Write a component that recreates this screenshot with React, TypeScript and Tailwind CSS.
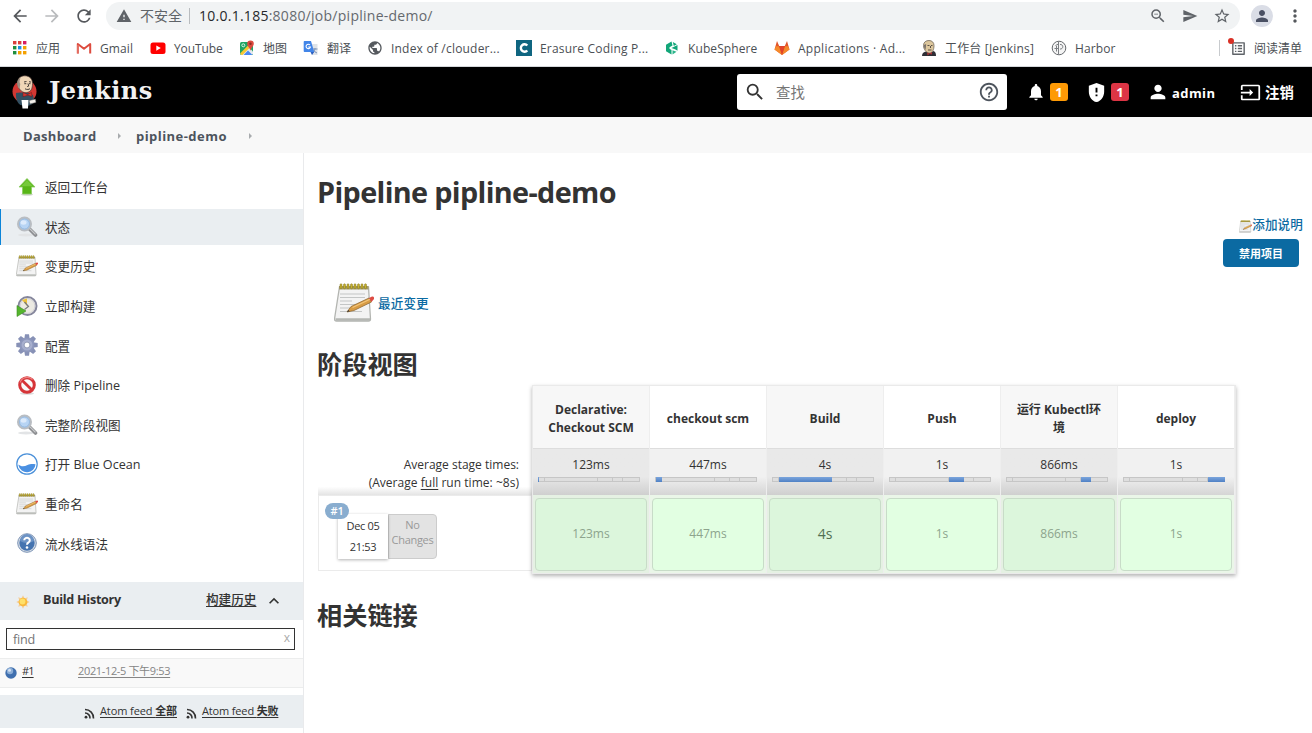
import React from 'react';
import {
  MdArrowBack, MdArrowForward, MdRefresh, MdWarning, MdZoomOut, MdSend, MdStarBorder, MdPerson, MdMoreVert,
  MdSearch, MdHelpOutline, MdNotifications, MdGppMaybe, MdInput, MdKeyboardArrowUp, MdListAlt, MdPublic,
} from 'react-icons/md';

type IconProps = { className?: string };

const AppsIcon = () => (
  <svg viewBox="0 0 16 16" className="size-4">
    {['#d93f3c', '#d93f3c', '#d81b60', '#1e8e3e', '#1a8fe3', '#f4a100', '#1e8e3e', '#f4a100', '#f4a100'].map((c, i) => (
      <rect key={i} x={1 + (i % 3) * 5} y={1 + Math.floor(i / 3) * 5} width="3.4" height="3.4" fill={c} />
    ))}
  </svg>
);

const GmailIcon = () => (
  <svg viewBox="0 0 16 16" className="size-4">
    <path d="M1.8 13.5V4L8 8.7 14.2 4v9.500" fill="none" stroke="#dd4b3e" strokeWidth="2" strokeLinejoin="round" />
    <path d="M2 5v8.500" stroke="#e57368" strokeWidth="1.600" />
  </svg>
);

const YouTubeIcon = () => (
  <svg viewBox="0 0 16 16" className="size-4">
    <rect x="0.500" y="2.500" width="15" height="11.500" rx="2.500" fill="#f00" />
    <path d="M6.300 5.500v5.200L10.800 8.100z" fill="#fff" />
  </svg>
);

const MapsIcon = () => (
  <svg viewBox="0 0 16 16" className="size-4">
    <rect x="1" y="2" width="13" height="13" rx="1.500" fill="#1fa463" />
    <path d="M1.500 15 9.500 7 14 11.500V13.500L12.500 15z" fill="#e8eaed" />
    <path d="M1 13.500 9 5.500l2 2L3.500 15H2.500z" fill="#f7c933" />
    <path d="M4.500 15l4.500-4.500L13.500 15z" fill="#4a89f3" />
    <circle cx="4.300" cy="5.300" r="1.500" fill="none" stroke="#d8f5e6" strokeWidth="1" />
    <path d="M11.500 0.500a3.300 3.300 0 0 0-3.300 3.300c0 2.200 2.300 3.200 3.300 7 1-3.800 3.300-4.800 3.300-7A3.300 3.300 0 0 0 11.500.5z" fill="#dd4b3e" />
    <circle cx="11.500" cy="3.800" r="1.200" fill="#8c2a22" />
  </svg>
);

const TranslateIcon = () => (
  <svg viewBox="0 0 16 16" className="size-4">
    <path d="M6 4h8.500v11H9z" fill="#dfe3e8" />
    <path d="M9.500 9h5M12 8v1c-.5 2-1.500 3-2.500 4M10.500 10c.8 1.500 2 2.500 3.500 3" stroke="#7b93b8" fill="none" />
    <path d="M1.500 1H8l3.200 11H1.500A1 1 0 0 1 .7 11V2a1 1 0 0 1 .8-1z" fill="#4285e8" />
    <path d="M7.500 12h3.700L9 15z" fill="#2b5fc0" />
    <path d="M7 5A2.200 2.200 0 1 0 7.400 7H5.200" fill="none" stroke="#fff" strokeWidth="1.100" />
  </svg>
);

const ErasureIcon = () => (
  <svg viewBox="0 0 16 16" className="size-4">
    <rect width="16" height="16" fill="#0f6580" />
    <path d="M11.300 5.500A3.700 3.700 0 1 0 11.300 10.500" fill="none" stroke="#fff" strokeWidth="2.400" />
  </svg>
);

const KubeSphereIcon = () => (
  <svg viewBox="0 0 16 16" className="size-4">
    <path d="M7.500 1.500 2 4.800v6.400l5.500 3.300V10L5.500 8.800V7.200L8.500 5.500z" fill="#12a679" />
    <path d="M8.800 2l4 2.300-3 1.700zM13.500 5v5.800L11.500 9.500 7.500 8z" fill="#12a679" />
    <path d="M8.500 10.200l4 1.600-4 2.600z" fill="#2cb58b" />
  </svg>
);

const GitLabIcon = () => (
  <svg viewBox="0 0 16 16" className="size-4">
    <path d="M8 15 .5 9.500 3 1l2.200 5h5.600L13 1l2.500 8.500z" fill="#e2562b" />
    <path d="M8 15 .5 9.500 2 6.200h3.200zM8 15l7.500-5.500L14 6.200h-3.200z" fill="#f58a2b" />
    <path d="M8 15 5 6h6z" fill="#e24329" />
  </svg>
);

const ButlerIcon = ({ className }: IconProps) => (
  <svg viewBox="0 0 26 34" className={className}>
    <ellipse cx="12.500" cy="16.500" rx="12" ry="11.500" fill="#d33833" />
    <path d="M4 18c3-1 13-1 17 2l1.500 7c-3 3-6 4-9 4l-5-1c-3-2-5-6-4.500-12z" fill="#335061" />
    <path d="M5.500 9C5 3.500 9 .6 13 .8c5 .1 7.500 3.600 7.500 7.800 0 5-1.500 8.500-6 9C10 18 7.500 14.500 6.500 12z" fill="#f0d6b7" stroke="#4a3a32" strokeWidth=".7" />
    <path d="M5.200 8c0 3 .8 5 2.300 6L8.300 9C7.200 7.500 7.500 5 8.500 3.200 6.500 3.700 5.200 5.500 5.200 8z" fill="#9b8f82" />
    <path d="M12 7l2.500-.5M17 6.700l2 .4M12.300 8.700h2M17 8.700h1.500M16 8.500l.7 2.600-1.500.5M13 13.800c2 1 4 .8 5-.2" stroke="#302a28" strokeWidth=".9" fill="none" />
    <path d="M11 17.500l4.500 2 4-2 .5 4-4-1.300-5 1.500z" fill="#d33833" stroke="#6d1514" strokeWidth=".5" />
    <path d="M9.500 25h7l-.5 8.500H10.500z" fill="#fff" />
    <path d="M17 25.500l6.500-1.500.5 3.500-6 1.500z" fill="#f3efe9" stroke="#4a4a4a" strokeWidth=".5" />
  </svg>
);

const MiniButlerIcon = () => (
  <svg viewBox="0 0 16 16" className="size-4">
    <path d="M1 16c0-3 2-4 4-4.500l4 1.500 3.500-2c2 .5 2.500 2.500 2.500 5z" fill="#2e2f36" />
    <path d="M2.500 5.500C2.500 2 5 .5 8 .5s5 2 5 5c0 4-1.500 7.500-4.500 7.500S2.500 9.500 2.500 5.500z" fill="#dcc69c" stroke="#746a5d" strokeWidth=".8" />
    <path d="M3 5c0 2 .5 4 1.500 5L5.200 4z" fill="#77706a" />
    <path d="M6.500 5.500h2M10 5.500h1.500M9.500 6v2M7 10h3.500" stroke="#4c443d" strokeWidth=".9" />
    <path d="M6 12.500l2.500 1L11 12v2.500L8.500 14 6.500 15.500z" fill="#a33" />
  </svg>
);

const HarborIcon = () => (
  <svg viewBox="0 0 16 16" className="size-4">
    <circle cx="8" cy="8" r="6.800" fill="#f4f4f4" stroke="#666a6e" strokeWidth="1" />
    <path d="M7.500 2v12M3.500 8.500h4M4.500 5.500 7.500 4M9 4.500a2.300 2.300 0 1 1 0 4.500M5.500 6v5.500" fill="none" stroke="#7b7f83" strokeWidth="1" />
  </svg>
);

const FeedIcon = () => (
  <svg viewBox="0 0 11 11" className="mt-1 size-[11px]">
    <path d="M1 1.500a8.500 8.500 0 0 1 8.500 9M1 5a5 5 0 0 1 5 5.500" fill="none" stroke="#333" strokeWidth="1.600" />
    <circle cx="2" cy="9.200" r="1.400" fill="#333" />
  </svg>
);

const bookmarks: { icon: React.ReactNode; label: string; box: string; text?: string }[] = [
  { icon: <AppsIcon />, label: '应用', box: 'w-16' },
  { icon: <GmailIcon />, label: 'Gmail', box: 'w-[74px]' },
  { icon: <YouTubeIcon />, label: 'YouTube', box: 'w-[89px]', text: 'tracking-[-0.1px]' },
  { icon: <MapsIcon />, label: '地图', box: 'w-16' },
  { icon: <TranslateIcon />, label: '翻译', box: 'w-16' },
  { icon: <MdPublic className="size-4 text-[#55595e]" />, label: 'Index of /clouder...', box: 'w-[149px]', text: 'tracking-[0.2px]' },
  { icon: <ErasureIcon />, label: 'Erasure Coding P...', box: 'w-[148px]', text: 'tracking-[0.18px]' },
  { icon: <KubeSphereIcon />, label: 'KubeSphere', box: 'w-[110px]' },
  { icon: <GitLabIcon />, label: 'Applications · Ad...', box: 'w-[147px]', text: 'tracking-[0.27px]' },
  { icon: <MiniButlerIcon />, label: '工作台 [Jenkins]', box: 'w-[130px]', text: 'tracking-[0.18px]' },
  { icon: <HarborIcon />, label: 'Harbor', box: 'w-[100px]' },
];

const UpIcon = () => (
  <svg viewBox="0 0 22 22" className="size-[22px]">
    <ellipse cx="11" cy="18.500" rx="6" ry="1.300" fill="#d5d9d2" />
    <path d="M11 2.500 19 11h-3.500v7h-9v-7H3z" fill="#58b518" stroke="#8ccb62" strokeWidth=".8" />
    <path d="M11 4l6 6.300H5z" fill="#76c93b" />
  </svg>
);

const LensIcon = () => (
  <svg viewBox="0 0 22 22" className="size-[22px]">
    <ellipse cx="10" cy="19" rx="8" ry="1.500" fill="#e2e4e6" />
    <path d="M13.500 13l6 6" stroke="#8d8f92" strokeWidth="3.600" strokeLinecap="round" />
    <path d="M14 12.800l5.500 5.500" stroke="#c9cbcd" strokeWidth="1.200" />
    <circle cx="8.500" cy="8" r="6.500" fill="#a9cbef" stroke="#b9bdc2" strokeWidth="2" />
    <circle cx="8.500" cy="8" r="5" fill="#b7d4f4" stroke="#8fb0d6" strokeWidth=".7" />
    <ellipse cx="7.500" cy="6.500" rx="3" ry="2.200" fill="#dceafb" />
  </svg>
);

const NotepadIcon = ({ className = 'size-[22px]' }: IconProps) => (
  <svg viewBox="0 0 40 40" className={className}>
    <path d="M5.500 4h29l2 32q0 2-2 2h-32q-2 0-2-2z" fill="#f3f3f3" stroke="#b3b5b1" strokeWidth="1.300" />
    <path d="M1.500 36.500h34.500" stroke="#b5b7b3" strokeWidth="2.600" />
    <path d="M5 3h29.500v3.500H5z" fill="#a39a6a" />
    {[6, 9.500, 13, 16.500, 20, 23.500, 27, 30.500].map((x) => (
      <rect key={x} x={x} y="0.800" width="2" height="5" rx="1" fill="#c5b02d" stroke="#857721" strokeWidth=".5" />
    ))}
    <path d="M6 11h25M6 14.500h25M6 18h12M6 21.500h20M6 25h14M6 28.500h22" stroke="#c4c6c6" strokeWidth="1.100" />
    <path d="M13 29l4-5.500L35 15l2.500 4-17.500 8.500z" fill="#d89c45" stroke="#86602b" strokeWidth=".7" />
    <path d="M18.500 24.500 36 16.300" stroke="#f3c67b" strokeWidth="1.200" />
    <path d="M35 15l3-1.500q2.500-.3 2 2.500L37.500 19z" fill="#dd4b43" />
    <path d="M13 29l1.300-1.900 1.400 1.100z" fill="#333" />
  </svg>
);

const ClockIcon = () => (
  <svg viewBox="0 0 22 22" className="size-[22px]">
    <circle cx="11.500" cy="11" r="9" fill="#eceae2" stroke="#85869c" strokeWidth="2" />
    <circle cx="11.500" cy="11" r="7.400" fill="none" stroke="#c9c9d2" strokeWidth=".8" />
    <path d="M11 11 6 5l5-1.500z" fill="#ecc23b" />
    <path d="M8.500 7l4 4.500-4 3" fill="none" stroke="#77797b" strokeWidth="1.200" />
    <path d="M1 10.500 10 16 1 21.500z" fill="#55b52e" stroke="#3c8d22" strokeWidth=".6" />
  </svg>
);

const GearIcon = () => (
  <svg viewBox="0 0 22 22" className="size-[22px]">
    {[0, 45, 90, 135, 180, 225, 270, 315].map((a) => (
      <path key={a} d="M8.300 5 9 .3h4l.7 4.700z" fill="#8791b6" transform={`rotate(${a} 11 11)`} />
    ))}
    <circle cx="11" cy="11" r="7.300" fill="#8d97bc" />
    <circle cx="11" cy="11" r="5.500" fill="#a7afce" />
    <circle cx="11" cy="11" r="2.900" fill="#fff" stroke="#77809f" strokeWidth=".7" />
  </svg>
);

const NoEntryIcon = () => (
  <svg viewBox="0 0 22 22" className="size-[22px]">
    <ellipse cx="11" cy="19.500" rx="7" ry="1.300" fill="#dcdcdc" />
    <circle cx="11" cy="11" r="7.300" fill="#fafafa" stroke="#d63438" strokeWidth="3" />
    <path d="M6 6.200l10 9.800" stroke="#d63438" strokeWidth="2.800" />
    <path d="M4 8.500a7.600 7.600 0 0 1 12.500-3" fill="none" stroke="#ed8080" strokeWidth="1.200" />
  </svg>
);

const OceanIcon = () => (
  <svg viewBox="0 0 22 22" className="size-[22px]">
    <circle cx="11" cy="11" r="10.200" fill="#fff" stroke="#4a90d9" strokeWidth="1.200" />
    <path d="M2.500 11.500c2.500 2.500 6 2 9 .5 3-1.400 5-1.200 8-.8A8.600 8.600 0 0 1 2.500 12.500z" fill="#4a90e2" />
  </svg>
);

const HelpIcon = () => (
  <svg viewBox="0 0 22 22" className="size-[22px]">
    <circle cx="11" cy="11" r="9.300" fill="#d6dce5" stroke="#7b93b5" strokeWidth="1" />
    <circle cx="11" cy="11" r="7.700" fill="#4574b0" />
    <path d="M4 9a7 7 0 0 1 14 0q-7 4-14 0z" fill="#6c93c5" />
    <path d="M8.200 8.300a2.800 2.500 0 1 1 4.300 2.200q-1.500.8-1.500 2.300" fill="none" stroke="#fff" strokeWidth="2" />
    <circle cx="11" cy="15.500" r="1.300" fill="#fff" />
  </svg>
);

const SunIcon = () => (
  <svg viewBox="0 0 14 14" className="size-3.5">
    {[0, 45, 90, 135, 180, 225, 270, 315].map((a) => (
      <path key={a} d="M5.600 3 7 .3 8.400 3z" fill="#f4cd97" transform={`rotate(${a} 7 7)`} />
    ))}
    <circle cx="7" cy="7" r="4.300" fill="#f9b83a" />
    <circle cx="6.500" cy="6.500" r="2.900" fill="#ffe06a" />
  </svg>
);

const menu: { icon: React.ReactNode; label: string; active?: boolean }[] = [
  { icon: <UpIcon />, label: '返回工作台' },
  { icon: <LensIcon />, label: '状态', active: true },
  { icon: <NotepadIcon />, label: '变更历史' },
  { icon: <ClockIcon />, label: '立即构建' },
  { icon: <GearIcon />, label: '配置' },
  { icon: <NoEntryIcon />, label: '删除 Pipeline' },
  { icon: <LensIcon />, label: '完整阶段视图' },
  { icon: <OceanIcon />, label: '打开 Blue Ocean' },
  { icon: <NotepadIcon />, label: '重命名' },
  { icon: <HelpIcon />, label: '流水线语法' },
];

const stages = [
  { name: 'Declarative: Checkout SCM', time: '123ms' },
  { name: 'checkout scm', time: '447ms' },
  { name: 'Build', time: '4s' },
  { name: 'Push', time: '1s' },
  { name: '运行 Kubectl环境', time: '866ms' },
  { name: 'deploy', time: '1s' },
];

const segments = [1, 6, 53, 15, 10, 17];

function BrowserBar() {
  return (
    <div className="h-[67px] border-b border-[#d5d8db] bg-white text-[#4b4f54]">
      <div className="flex h-8 items-center">
        <MdArrowBack className="ml-2.5 size-5 text-[#55585c]" />
        <MdArrowForward className="ml-3 size-5 text-[#b9bbbd]" />
        <MdRefresh className="ml-3 size-5 text-[#55585c]" />
        <div className="ml-3 flex h-7 w-[1134px] items-center rounded-full bg-[#f1f3f4] pl-2.5">
          <MdWarning className="size-4 text-[#5f6368]" />
          <span className="ml-2 w-[43px] text-[14px] text-[#5f6368]">不安全</span>
          <span className="ml-1.5 h-4 w-px bg-[#b9bcbf]" />
          <span className="ml-[9px] text-[14px] tracking-[0.26px] text-[#65696e]">
            <span className="text-[#26282b]">10.0.1.185</span>:8080/job/pipline-demo/
          </span>
          <MdZoomOut className="ml-auto size-[18px] text-[#5f6368]" />
          <MdSend className="ml-[15px] size-4 text-[#5f6368]" />
          <MdStarBorder className="mr-[9px] ml-[15px] size-[18px] text-[#5f6368]" />
        </div>
        <span className="ml-[11px] flex size-[22px] items-center justify-center rounded-full bg-[#dadde6]">
          <MdPerson className="size-[18px] text-[#4a5063]" />
        </span>
        <MdMoreVert className="ml-3 size-5 text-[#55585c]" />
      </div>
      <div className="flex h-8 items-center pl-3 text-[12px]">
        {bookmarks.map((b) => (
          <div key={b.label} className={`flex shrink-0 items-center gap-2 ${b.box}`}>
            {b.icon}
            <span className={`pt-0.5 whitespace-nowrap ${b.text ?? 'tracking-[0.1px]'}`}>{b.label}</span>
          </div>
        ))}
        <div className="ml-[68px] flex h-4 items-center border-l border-[#c8cbce] pl-2.5">
          <span className="relative flex">
            <MdListAlt className="size-[17px] text-[#5f6368]" />
            <span className="absolute -top-0.5 -left-0.5 size-1.5 rounded-full bg-[#d93025]" />
          </span>
          <span className="ml-[7px] pt-0.5 whitespace-nowrap">阅读清单</span>
        </div>
      </div>
    </div>
  );
}

function Header() {
  return (
    <header className="flex h-[50px] items-center bg-black text-white">
      <ButlerIcon className="ml-3 h-[34px] w-[26px]" />
      <span className="-mt-0.5 ml-[11px] w-[109px] font-['DejaVu_Serif',serif] text-[24px] leading-[30px] font-bold tracking-[0.4px] text-[#f2f2f2]">
        Jenkins
      </span>
      <div className="ml-[579px] flex h-9 w-[270px] items-center rounded-[3px] bg-white pl-[7px]">
        <MdSearch className="size-[22px] text-[#333]" />
        <span className="ml-2.5 pt-0.5 text-[14.4px] text-[#757575]">查找</span>
        <MdHelpOutline className="mr-[7px] ml-auto size-[22px] text-[#4d545d]" />
      </div>
      <MdNotifications className="ml-[19px] size-5" />
      <span className="ml-1 flex size-[18px] items-center justify-center rounded-[3px] bg-[#fe9a05] pt-px text-[13px] font-bold">1</span>
      <MdGppMaybe className="ml-[17px] size-[23px]" />
      <span className="ml-[3px] flex size-[18px] items-center justify-center rounded-[3px] bg-[#dc3545] pt-px text-[13px] font-bold">1</span>
      <MdPerson className="ml-[18px] size-[22px]" />
      <span className="ml-[3px] w-[68px] pt-0.5 text-[13px] font-bold tracking-[0.4px]">admin</span>
      <MdInput className="size-[21px]" />
      <span className="ml-1 pt-0.5 text-[14.4px] font-bold">注销</span>
    </header>
  );
}

function Crumbs() {
  const arrow = <span className="size-0 border-y-[3px] border-l-[3px] border-y-transparent border-l-[#a8abae]" />;
  return (
    <nav className="flex h-9 items-center bg-[#f8f8f8] pt-0.5 pl-[23px] text-[13px] font-bold text-[#4d545d]">
      <span className="w-[95px] tracking-[0.3px]">Dashboard</span>
      {arrow}
      <span className="ml-[15px] w-[113px] tracking-[0.45px]">pipline-demo</span>
      {arrow}
    </nav>
  );
}

function Sidebar() {
  return (
    <aside className="flex w-[304px] shrink-0 flex-col border-r border-[#e9eaec]">
      <ul className="flex flex-col gap-[3.6px] pt-4">
        {menu.map((m, i) => (
          <li
            key={i}
            className={`flex h-9 items-center border-l pl-[15px] ${m.active ? 'border-[#0b84d8] bg-[#eaeef1]' : 'border-transparent'}`}
          >
            {m.icon}
            <span className="ml-[7px] pt-[3px] whitespace-nowrap text-[12.6px]">{m.label}</span>
          </li>
        ))}
      </ul>
      <div className="mt-[21px] flex h-[38px] items-center bg-[#eaeef1] pl-4">
        <span className="mt-0.5"><SunIcon /></span>
        <span className="-mt-0.5 ml-[13px] w-[163px] text-[12.6px] font-bold tracking-[-0.28px]">Build History</span>
        <span className="-mt-0.5 text-[12.6px] font-medium underline underline-offset-2">构建历史</span>
        <MdKeyboardArrowUp className="ml-2 size-[20px]" />
      </div>
      <div className="mx-[6px] mt-2 flex h-[22px] w-[289px] items-center justify-between border border-[#333] px-[5px] text-[#757575]">
        <span className="pt-0.5 pl-px text-[12.6px] tracking-[-0.2px]">find</span>
        <span className="-mt-0.5 mr-[-1px] text-[12px] text-[#aaa]">x</span>
      </div>
      <div className="mt-2 flex h-[30px] items-center border-y border-[#eceded] bg-[#f9f9f9] pb-1 pl-[5px] text-[11px]">
        <svg viewBox="0 0 12 12" className="mt-1 size-3">
          <circle cx="6" cy="6" r="5.700" fill="#3f6fae" />
          <circle cx="5" cy="4" r="3.200" fill="#8badd6" />
          <circle cx="4.500" cy="3.300" r="1.500" fill="#d3e1f2" />
        </svg>
        <span className="-mt-0.5 ml-[5px] w-14 tracking-[-0.9px] underline underline-offset-2">#1</span>
        <span className="-mt-0.5 tracking-[-0.35px] text-[#858585] underline underline-offset-2">2021-12-5 下午9:53</span>
      </div>
      <div className="mt-[7px] flex h-[33px] items-center bg-[#eaeef1] pl-[84px] text-[11px]">
        <FeedIcon />
        <span className="-mt-0.5 ml-[5px] w-[86px] whitespace-nowrap tracking-[-0.1px] underline underline-offset-2">Atom feed <b>全部</b></span>
        <FeedIcon />
        <span className="-mt-0.5 ml-[5px] whitespace-nowrap tracking-[-0.15px] underline underline-offset-2">Atom feed <b>失败</b></span>
      </div>
    </aside>
  );
}

function StageBar({ index }: { index: number }) {
  return (
    <div className="mt-[3px] ml-[5px] flex h-[5px] w-[102px]">
      {segments.map((w, i) => (
        <span
          key={i}
          style={{ width: w }}
          className={i === index ? 'bg-linear-to-b from-[#7ba5dc] to-[#4f81c5]' : 'border-y border-r border-[#c6c6c6] bg-[#dedede]'}
        />
      ))}
    </div>
  );
}

function StageView() {
  return (
    <div className="flex h-[189px]">
      <div className="flex w-[214px] flex-col pt-[64px]">
        <div className="h-[46px] bg-linear-to-b from-white from-82% to-[#e4e4e4] pt-[7px] pr-[13px] text-right text-[12px] leading-[18px]">
          <p>Average stage times:</p>
          <p className="tracking-[0.03px]">(Average <u className="underline-offset-2">full</u> run time: ~8s)</p>
        </div>
        <div className="flex h-[76px] border border-[#ebebeb] bg-white pt-[18px] pl-[19px]">
          <div className="relative h-[45px] w-[50px] bg-white text-center text-[11px] leading-[21px] tracking-[-0.3px] shadow-[0_1px_3px_rgba(0,0,0,0.3)]">
            <p className="pt-px">Dec 05</p>
            <p>21:53</p>
            <span className="absolute -top-[11px] -left-[13px] h-4 w-6 rounded-full bg-[#89adcf] text-[11px] leading-4 font-semibold text-white">#1</span>
          </div>
          <div className="h-[45px] w-[49px] rounded-r border border-[#ccc] bg-[#e3e3e3] pt-[2px] text-center text-[11px] leading-[15px] tracking-[-0.3px] text-[#999]">
            No<br />Changes
          </div>
        </div>
      </div>
      <div className="flex w-[704px] border border-[#eaeaea] shadow-[0_2px_4px_rgba(0,0,0,0.3)]">
        {stages.map((s, i) => {
          const even = i % 2 === 0;
          return (
            <div key={s.name} className="flex w-[117px] flex-col border-r border-[#eee]">
              <div className={`flex h-[63px] items-center justify-center border-b border-[#ddd] pt-[3px] text-center text-[12px] leading-[18px] font-bold ${even ? 'bg-[#f7f7f7]' : 'bg-white'}`}>
                <span className={i === 0 ? 'w-[90px]' : i === 4 ? 'w-[92px] tracking-[-0.05px]' : ''}>{s.name}</span>
              </div>
              <div className={`h-[46px] bg-linear-to-b from-60% pt-[7px] text-center text-[12px] leading-[18px] ${even ? 'from-[#e9e9e9] to-[#cfcfcf]' : 'from-[#f1f1f1] to-[#d5d5d5]'}`}>
                {s.time}
                <StageBar index={i} />
              </div>
              <div className={`flex-1 px-0.5 pt-[3px] pb-0.5 ${even ? 'bg-[#e5f1e3]' : 'bg-[#eaf6e8]'}`}>
                <div className={`flex h-[73px] items-center justify-center rounded border border-[#c8dcc8] pb-0.5 ${even ? 'bg-[#dcf6dc]' : 'bg-[#e2ffe2]'} ${i === 2 ? 'text-[14px] text-[#526f52]' : 'text-[12px] text-[#8da48d]'}`}>
                  {s.time}
                </div>
              </div>
            </div>
          );
        })}
      </div>
    </div>
  );
}

export default function App() {
  return (
    <div className="flex h-[733px] w-[1312px] flex-col overflow-hidden bg-white font-['Open_Sans','Noto_Sans_CJK_SC',sans-serif] leading-none text-[#333]">
      <BrowserBar />
      <Header />
      <Crumbs />
      <div className="flex min-h-0 flex-1">
        <Sidebar />
        <main className="flex flex-1 flex-col pl-3.5">
          <h1 className="mt-[19px] -ml-px h-10 text-[28.8px] leading-10 font-bold tracking-[-0.65px]">Pipeline pipline-demo</h1>
          <div className="mt-1 flex flex-col items-end">
            <div className="mr-[9px] flex h-[18px] items-center text-[12.6px] font-medium text-[#0b6aa2]">
              <NotepadIcon className="mt-0.5 size-[13px]" />
              <span className="tracking-[0.1px]">添加说明</span>
            </div>
            <div className="mt-[5px] mr-[13px] flex h-7 w-[76px] items-center justify-center rounded bg-[#0b6aa2] text-[11px] font-bold text-white">
              禁用项目
            </div>
          </div>
          <div className="mt-4 ml-4 flex h-10 items-center">
            <NotepadIcon className="size-10" />
            <span className="ml-1 pt-[3px] text-[12.6px] font-medium tracking-[0.1px] text-[#0b6aa2]">最近变更</span>
          </div>
          <h2 className="mt-[21px] -ml-px mb-[1px] h-10 text-[25.2px] leading-10 font-bold">阶段视图</h2>
          <StageView />
          <h2 className="mt-[21px] -ml-px h-10 text-[25.2px] leading-10 font-bold">相关链接</h2>
        </main>
      </div>
    </div>
  );
}
